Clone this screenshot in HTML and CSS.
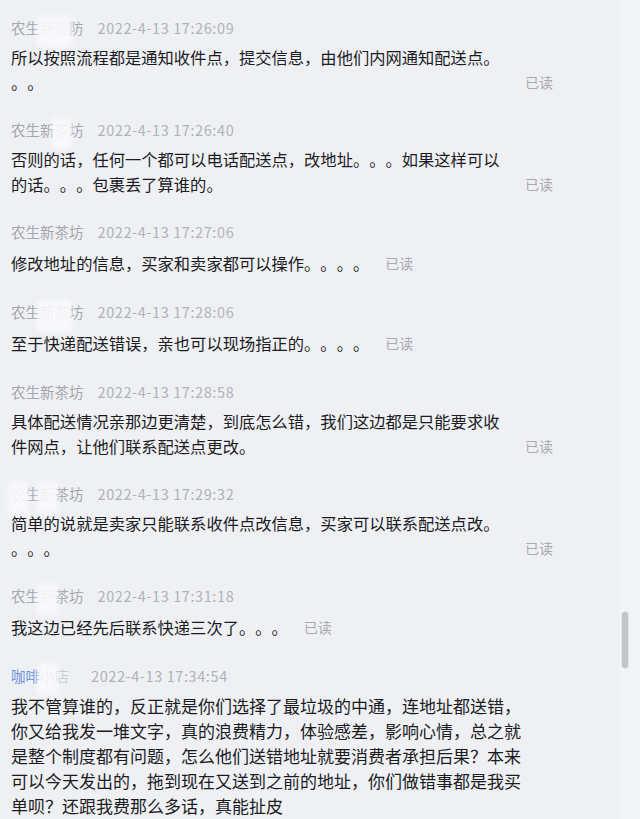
FILE: index.html
```html
<!DOCTYPE html>
<html lang="zh-CN">
<head>
<meta charset="utf-8">
<title>聊天记录</title>
<link rel="stylesheet" href="styles.css">
</head>
<body>
<div class="app">
  <div class="list">
    <div class="msg">
      <div class="head"><span class="name">农生<span class="smudge">新茶</span>防</span><span class="date">2022-4-13 17:26:09</span></div>
      <div class="row multi"><div class="text">所以按照流程都是通知收件点，提交信息，由他们内网通知配送点。<br>。。</div><span class="read">已读</span></div>
    </div>
    <div class="msg">
      <div class="head"><span class="name">农生新<span class="smudge">茶</span>坊</span><span class="date">2022-4-13 17:26:40</span></div>
      <div class="row multi"><div class="text">否则的话，任何一个都可以电话配送点，改地址。。。如果这样可以<br>的话。。。包裹丢了算谁的。</div><span class="read">已读</span></div>
    </div>
    <div class="msg">
      <div class="head"><span class="name">农生新茶坊</span><span class="date">2022-4-13 17:27:06</span></div>
      <div class="row single"><div class="text">修改地址的信息，买家和卖家都可以操作。。。。</div><span class="read">已读</span></div>
    </div>
    <div class="msg">
      <div class="head"><span class="name">农生<span class="smudge">新茶</span>坊</span><span class="date">2022-4-13 17:28:06</span></div>
      <div class="row single"><div class="text">至于快递配送错误，亲也可以现场指正的。。。。</div><span class="read">已读</span></div>
    </div>
    <div class="msg">
      <div class="head"><span class="name">农生新茶坊</span><span class="date">2022-4-13 17:28:58</span></div>
      <div class="row multi"><div class="text">具体配送情况亲那边更清楚，到底怎么错，我们这边都是只能要求收<br>件网点，让他们联系配送点更改。</div><span class="read">已读</span></div>
    </div>
    <div class="msg">
      <div class="head"><span class="name"><span class="smudge">农</span>生<span class="smudge">新</span>茶坊</span><span class="date">2022-4-13 17:29:32</span></div>
      <div class="row multi"><div class="text">简单的说就是卖家只能联系收件点改信息，买家可以联系配送点改。<br>。。。</div><span class="read">已读</span></div>
    </div>
    <div class="msg">
      <div class="head"><span class="name">农生<span class="smudge">新</span>茶坊</span><span class="date">2022-4-13 17:31:18</span></div>
      <div class="row single"><div class="text">我这边已经先后联系快递三次了。。。</div><span class="read">已读</span></div>
    </div>
    <div class="msg">
      <div class="head"><span class="name buyer">咖啡<span class="smudge">小</span><span class="faint">店</span></span><span class="date">2022-4-13 17:34:54</span></div>
      <div class="row"><div class="text large">我不管算谁的，反正就是你们选择了最垃圾的中通，连地址都送错，<br>你又给我发一堆文字，真的浪费精力，体验感差，影响心情，总之就<br>是整个制度都有问题，怎么他们送错地址就要消费者承担后果？本来<br>可以今天发出的，拖到现在又送到之前的地址，你们做错事都是我买<br>单呗？还跟我费那么多话，真能扯皮</div></div>
    </div>
  </div>
  <div class="track"><div class="thumb"></div></div>
</div>
</body>
</html>
```

FILE: styles.css
```css
html, body {
  margin: 0;
  padding: 0;
}
body {
  background: #eef0f4;
  font-family: "Noto Sans CJK SC", "Noto Sans", sans-serif;
  color: #1c1c1e;
  text-spacing-trim: space-all;
}
.app {
  display: flex;
  height: 819px;
  overflow: hidden;
}
.list {
  flex: 1;
  padding: 18px 0 0 11px;
}
.msg {
  margin-bottom: 25px;
}
.head {
  display: flex;
  align-items: center;
  height: 20px;
  line-height: 20px;
  font-size: 14.5px;
  color: #a4a7ac;
  margin-bottom: 7px;
}
.name {
  margin-right: 14px;
  white-space: nowrap;
}
.name.buyer {
  color: #6a93db;
  margin-right: 22px;
}
.faint {
  color: #c9ccd2;
}
.smudge {
  position: relative;
}
.smudge::after {
  content: "";
  position: absolute;
  left: -3px;
  right: -3px;
  top: -1px;
  bottom: -9px;
  background: rgba(249, 250, 252, 0.9);
  filter: blur(2.5px);
}
.date {
  font-size: 14.5px;
  letter-spacing: 0.6px;
  color: #b0b3b8;
}
.row {
  display: flex;
  align-items: flex-end;
}
.row.single {
  align-items: center;
  height: 28px;
}
.text {
  font-size: 16.3px;
  line-height: 25px;
  white-space: nowrap;
  text-spacing-trim: space-all;
}
.row.multi .text {
  width: 498px;
}
.text.large {
  font-size: 17px;
}
.read {
  margin-left: 16px;
  font-size: 14px;
  line-height: 25px;
  color: #a9abaf;
  white-space: nowrap;
}
.row.multi .read {
  line-height: 22px;
  margin-bottom: 2px;
}
.track {
  width: 20px;
  background: #f3f4f7;
}
.thumb {
  margin-top: 612px;
  margin-left: 2px;
  width: 6px;
  height: 56px;
  border-radius: 3px;
  background: #c3c5c9;
  box-shadow: 0 0 0 1px #e6e7ea;
}
```
